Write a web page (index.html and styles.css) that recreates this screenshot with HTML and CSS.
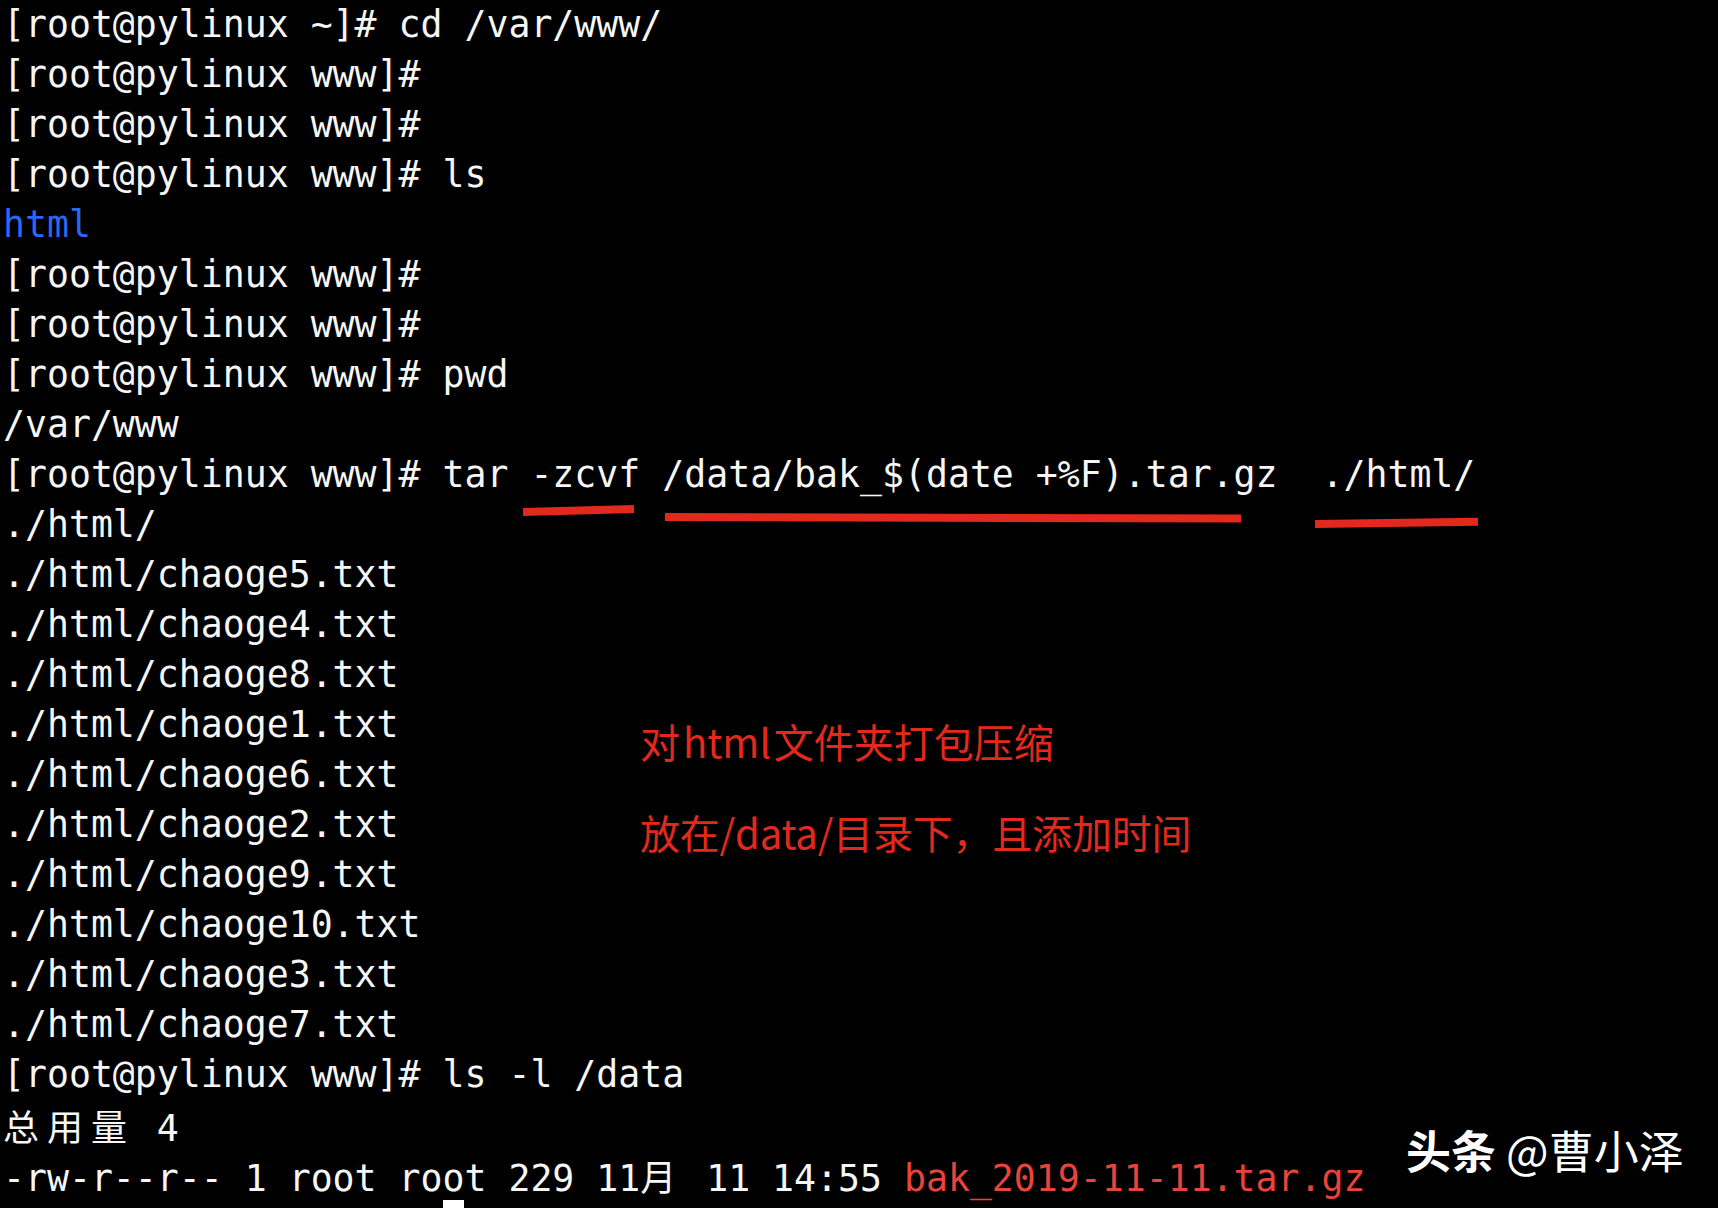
FILE: index.html
```html
<!DOCTYPE html>
<html lang="zh-CN">
<head>
<meta charset="utf-8">
<title>terminal</title>
<link rel="stylesheet" href="styles.css">
</head>
<body>
<div class="screen">
  <div class="term">
    <div class="ln">[root@pylinux ~]# cd /var/www/</div>
    <div class="ln">[root@pylinux www]#</div>
    <div class="ln">[root@pylinux www]#</div>
    <div class="ln">[root@pylinux www]# ls</div>
    <div class="ln"><span class="dir">html</span></div>
    <div class="ln">[root@pylinux www]#</div>
    <div class="ln">[root@pylinux www]#</div>
    <div class="ln">[root@pylinux www]# pwd</div>
    <div class="ln">/var/www</div>
    <div class="ln">[root@pylinux www]# tar -zcvf /data/bak_$(date +%F).tar.gz  ./html/</div>
    <div class="ln">./html/</div>
    <div class="ln">./html/chaoge5.txt</div>
    <div class="ln">./html/chaoge4.txt</div>
    <div class="ln">./html/chaoge8.txt</div>
    <div class="ln">./html/chaoge1.txt</div>
    <div class="ln">./html/chaoge6.txt</div>
    <div class="ln">./html/chaoge2.txt</div>
    <div class="ln">./html/chaoge9.txt</div>
    <div class="ln">./html/chaoge10.txt</div>
    <div class="ln">./html/chaoge3.txt</div>
    <div class="ln">./html/chaoge7.txt</div>
    <div class="ln">[root@pylinux www]# ls -l /data</div>
    <div class="ln"><span class="w">总</span><span class="w">用</span><span class="w">量</span> 4</div>
    <div class="ln">-rw-r--r-- 1 root root 229 11<span class="w">月</span> 11 14:55 <span class="arc">bak_2019-11-11.tar.gz</span></div>
    <div class="ln">[root@pylinux www]# <span class="cursor"></span></div>
  </div>

  <div class="mark m1"></div>
  <div class="mark m2"></div>
  <div class="mark m3"></div>

  <div class="note n1">对<span class="lat">html</span>文件夹打包压缩</div>
  <div class="note n2">放在/data/目录下，且添加时间</div>

  <div class="wm"><b>头条</b> @曹小泽</div>
</div>
</body>
</html>
```

FILE: styles.css
```css
html, body {
  margin: 0;
  padding: 0;
  background: #000;
}
body {
  width: 1718px;
  height: 1208px;
  overflow: hidden;
}
.screen {
  position: relative;
  width: 1718px;
  height: 1208px;
  background: #000;
  overflow: hidden;
}
.term {
  font-family: "DejaVu Sans Mono", "Noto Sans CJK SC", monospace;
  font-size: 36.5px;
  line-height: 50px;
  color: #f6f6f6;
  padding-left: 3px;
}
.ln {
  white-space: pre;
  height: 50px;
}
.w {
  display: inline-block;
  width: 43.95px;
  font-family: "Noto Sans CJK SC", sans-serif;
  font-size: 36px;
}
.dir {
  color: #2a68f5;
}
.arc {
  color: #e8443a;
}
.cursor {
  display: inline-block;
  width: 21px;
  height: 48px;
  background: #fff;
  vertical-align: top;
}
.mark {
  position: absolute;
  height: 8px;
  background: #e3291d;
  transform-origin: left center;
}
.m1 {
  left: 523px;
  top: 508px;
  width: 111px;
  transform: rotate(-1.5deg);
}
.m2 {
  left: 665px;
  top: 513px;
  width: 576px;
  transform: rotate(0.15deg);
}
.m3 {
  left: 1315px;
  top: 520px;
  width: 163px;
  transform: rotate(-0.8deg);
}
.note {
  position: absolute;
  left: 640px;
  font-family: "Noto Sans CJK SC", sans-serif;
  font-size: 40px;
  line-height: 50px;
  color: #e3291d;
  white-space: nowrap;
}
.lat {
  margin: 0 3px 0 3px;
}
.n1 { top: 716px; }
.n2 { top: 807px; letter-spacing: -0.2px; }
.wm {
  position: absolute;
  left: 1406px;
  top: 1122px;
  font-family: "Noto Sans CJK SC", sans-serif;
  font-size: 45px;
  line-height: 56px;
  color: #fff;
  white-space: nowrap;
}
.wm b {
  font-weight: 700;
}
```
